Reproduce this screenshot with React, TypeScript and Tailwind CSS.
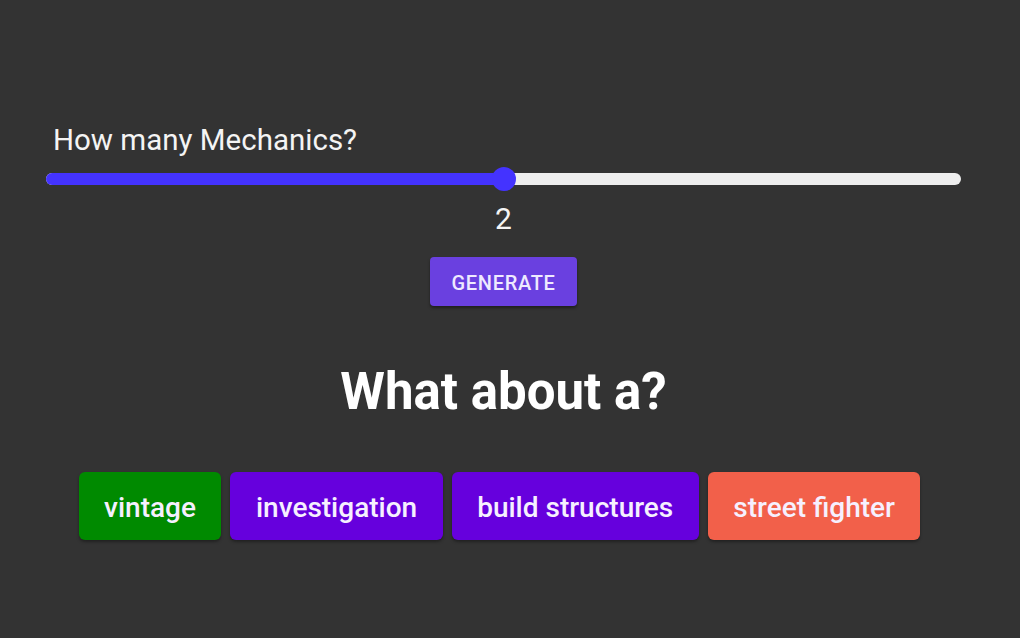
import React from "react";

const chips = [
  { label: "vintage", bg: "bg-[#008a00]" },
  { label: "investigation", bg: "bg-[#6600dd]" },
  { label: "build structures", bg: "bg-[#6600dd]" },
  { label: "street fighter", bg: "bg-[#f2604a]" },
];

export default function App() {
  return (
    <div className="w-[1020px] h-[638px] bg-[#333333] text-white font-['Roboto',sans-serif] overflow-hidden">
      <div className="ml-[46px] w-[915px] pt-[121px] flex flex-col">
        <div className="pl-[7px] text-[29.5px] leading-[38px] text-[#f4f4f4]">How many Mechanics?</div>
        <div className="relative h-[24px] mt-[8px] flex items-center">
          <div className="w-full h-[12px] rounded-full bg-[#eeeeee] flex">
            <div className="w-1/2 h-full rounded-full bg-[#4433ff]" />
          </div>
          <div className="absolute left-1/2 -translate-x-1/2 top-0 w-[24px] h-[24px] rounded-full bg-[#4433ff]" />
        </div>
        <div className="text-center text-[30px] leading-[36px] mt-[10px] text-[#f4f4f4]">2</div>
        <div className="flex justify-center mt-[20px]">
          <button className="w-[147px] h-[49px] pt-[2px] rounded-[4px] bg-[#6a40e0] text-[20px] font-medium tracking-[0.7px] text-[#eeeaff] shadow-[0_2px_3px_rgba(0,0,0,0.4)]">
            GENERATE
          </button>
        </div>
        <div className="text-center font-bold text-[51px] leading-[60px] mt-[56px]">What about a?</div>
        <div className="flex justify-center gap-[9px] mt-[50px] pr-[8px]">
          {chips.map((c) => (
            <div
              key={c.label}
              className={`${c.bg} h-[68px] px-[25.5px] pt-[3px] rounded-[6px] flex items-center text-[28px] font-medium text-[#f6f0ff] shadow-[0_2px_3px_rgba(0,0,0,0.35)]`}
            >
              {c.label}
            </div>
          ))}
        </div>
      </div>
    </div>
  );
}
